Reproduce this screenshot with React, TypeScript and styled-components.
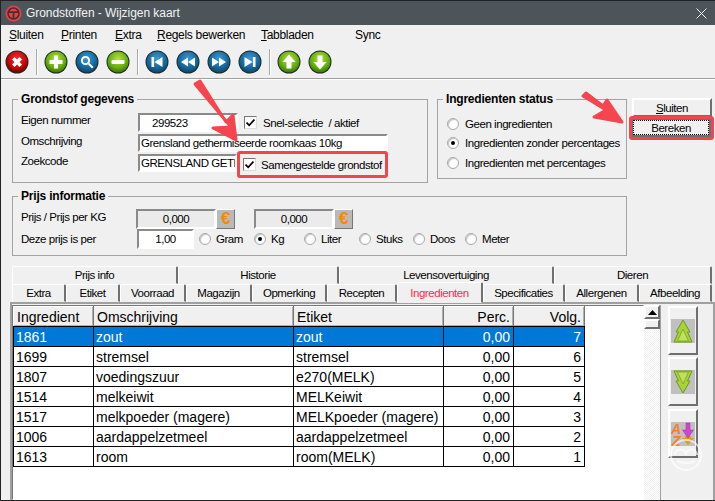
import React from "react";
import styled, { createGlobalStyle } from "styled-components";

const Global = createGlobalStyle`
  html, body { margin: 0; padding: 0; background: #f0f0f0; }
  body { font-family: "Liberation Sans", Arial, sans-serif; font-size: 11.5px; color: #000; letter-spacing: -.45px; }
  * { box-sizing: border-box; }
  span { white-space: nowrap; }
`;

const Win = styled.div`
  position: relative; width: 715px; height: 501px; overflow: hidden; background: #f0f0f0;
  border-left: 1px solid #222; border-bottom: 1px solid #222;
  display: flex; flex-direction: column;
`;
const TitleBar = styled.div`
  height: 25px; flex: none; background: #4d555a; color: #f2f3f3; display: flex; align-items: center;
  padding: 0 8px 0 4px; font-size: 12px; gap: 4px; border-top: 1px solid #222;
`;
const TitleText = styled.span` flex: 1; letter-spacing: -.05px; `;
const MenuBar = styled.div` height: 20px; flex: none; display: flex; align-items: center; padding: 0 0 0 8px; font-size: 12px; letter-spacing: -.3px; `;
const MenuItem = styled.span<{ $w: number }>` width: ${p => p.$w}px; flex: none; u { text-decoration: underline; } `;
const ToolBar = styled.div`
  height: 34px; flex: none; display: flex; align-items: center; padding: 0 0 0 4px; gap: 7px;
  border-bottom: 1px solid #a0a0a0; box-shadow: 0 1px 0 #fff;
`;
const ToolSep = styled.span` width: 2px; height: 26px; background: #a8a8a8; border-right: 1px solid #fff; margin-right: -1px; flex: none; `;

const Top = styled.div`
  display: grid; flex: none; grid-template-columns: 416px 9px 190px 5px 82px; grid-template-rows: 97px 68px;
  padding: 13px 0 0 11px; height: 187px;
`;
const Group = styled.fieldset<{ $col: string; $row: number; $h: number }>`
  grid-column: ${p => p.$col}; grid-row: ${p => p.$row}; height: ${p => p.$h}px; margin: 0; padding: 0 0 0 8px; min-width: 0;
  border: 1px solid #a3a3a3;
`;
const Legend = styled.legend`
  font-weight: bold; font-size: 12px; letter-spacing: -.2px; padding: 0 3px; margin-left: -3px; line-height: 14px; color: #000;
`;
const Row = styled.div<{ $h: number }>` display: flex; align-items: center; height: ${p => p.$h}px; `;
const Label = styled.span<{ $w: number; $up?: number }>` width: ${p => p.$w}px; flex: none; margin-top: ${p => p.$up ?? -4}px; `;
const Rows = styled.div<{ $mt: number }>` margin-top: ${p => p.$mt}px; display: flex; flex-direction: column; `;
const Sunken = styled.div<{ $w: number; $h: number; $bg?: string; $align?: string; $pl?: number }>`
  width: ${p => p.$w}px; height: ${p => p.$h}px; flex: none; background: ${p => p.$bg ?? "#fff"};
  border: 2px solid; border-color: #8a8a8a #fff #fff #8a8a8a; display: flex; align-items: center; overflow: hidden; white-space: nowrap;
  justify-content: ${p => p.$align ?? "flex-start"}; padding: 0 1px 0 ${p => p.$pl ?? 1}px;
`;
const CodeField = styled(Sunken)` align-self: flex-start; margin-top: 1px; `;
const Box = styled.span`
  width: 13px; height: 13px; flex: none; background: #fff; border: 1px solid; border-color: #777 #ddd #ddd #777;
  display: inline-flex; align-items: center; justify-content: center;
`;
const CheckWrap = styled.div` display: flex; align-items: center; gap: 6px; margin-left: 6px; `;
const Highlight = styled.div`
  width: 151px; height: 27px; margin-top: -2px; align-self: flex-start; border: 3px solid #f0474f; border-radius: 3px; flex: none; padding-left: 3px;
  display: flex; align-items: center; gap: 5px; background: #f0f0f0;
`;
const Dot = styled.span<{ $on?: boolean }>`
  width: 12px; height: 12px; border-radius: 50%; flex: none; background: #fff; border: 1px solid #a8a8a8;
  display: inline-flex; align-items: center; justify-content: center;
  box-shadow: inset 1px 1px 1px #c4c4c4;
  &::after { content: ""; width: 4px; height: 4px; border-radius: 50%; background: ${p => (p.$on ? "#000" : "transparent")}; }
`;
const RadioRow = styled.div` display: flex; align-items: center; height: 19.5px; gap: 6px; padding-left: 1px; `;
const Side = styled.div` grid-column: 5; grid-row: 1; display: flex; flex-direction: column; padding-top: 6px; margin-left: -3px; `;
const Raised = styled.div`
  background: #f0f0f0; border: 2px solid; border-color: #fff #6f6f6f #6f6f6f #fff; display: flex; align-items: center; justify-content: center;
`;
const CloseBtn = styled(Raised)` width: 80px; height: 19px; margin-left: 3px; u { text-decoration: underline; } `;
const RedBox = styled.div`
  width: 85px; height: 24px; margin-top: -1px; border: 3px solid #f0474f; border-radius: 3px; display: flex;
  background: #6f6f6f; padding: 0 1px 1px 0;
`;
const Focus = styled.div`
  flex: 1; margin: 1px; background: #f0f0f0; outline: 1px dotted #000; outline-offset: -1px; display: flex; align-items: center; justify-content: center;
`;
const EuroBtn = styled.div`
  width: 19px; height: 20px; flex: none; background: #b9b9b9; border: 1px solid; border-color: #fff #777 #777 #fff;
  color: #f08a10; font-weight: bold; font-size: 17px; display: flex; align-items: center; justify-content: center;
`;
const PriceRow = styled.div` display: flex; align-items: center; width: 118px; flex: none; `;
const Spacer = styled.div` width: 5px; flex: none; `;
const Option = styled.div<{ $w: number }>` width: ${p => p.$w}px; flex: none; display: flex; align-items: center; gap: 5px; `;

const Tabs = styled.div` flex: none; height: 36px; padding-left: 11px; display: flex; flex-direction: column; position: relative; z-index: 1; `;
const TabRow = styled.div` display: flex; height: 18px; align-items: flex-end; `;
const Tab = styled.div<{ $w: number; $on?: boolean }>`
  width: ${p => p.$w}px; flex: none; height: ${p => (p.$on ? 21 : 18)}px; margin-bottom: ${p => (p.$on ? -1 : 0)}px;
  background: #f0f0f0; border: 1px solid; border-color: #fff #707070 transparent #fff; border-right-width: 2px;
  border-radius: 2px 2px 0 0; display: flex; align-items: center; justify-content: center; white-space: nowrap;
  color: ${p => (p.$on ? "#ff2a45" : "#000")};
`;
const Panel = styled.div`
  flex: 1; margin-left: 9px; display: flex; border: 2px solid; border-color: #a0a0a0; border-bottom: 0; padding: 1px 0 0 0; min-height: 0;
`;
const ListArea = styled.div` width: 632px; flex: none; background: #fff; border: 1px solid; border-color: #777 #fff #fff #777; `;
const Table = styled.table`
  border-collapse: collapse; table-layout: fixed; width: 571px; font-size: 14px; letter-spacing: 0;
`;
const Th = styled.th<{ $w: number; $right?: boolean }>`
  width: ${p => p.$w}px; height: 20px; padding: 0 3px; font-weight: normal; background: #f0f0f0; text-align: ${p => (p.$right ? "right" : "left")};
  border: 1px solid; border-color: #fff #777 #000 #fff; box-shadow: inset -1px -1px 0 #b0b0b0; color: #000;
`;
const Td = styled.td<{ $right?: boolean; $sel?: boolean }>`
  height: 20px; padding: 0 3px 0 2px; text-align: ${p => (p.$right ? "right" : "left")};
  border: 1px solid #000; background: ${p => (p.$sel ? "#0078d7" : "#fff")}; color: ${p => (p.$sel ? "#fff" : "#000")}; white-space: nowrap; overflow: hidden;
`;
const Scroll = styled.div`
  width: 17px; flex: none; display: flex; flex-direction: column; border-right: 1px solid #a0a0a0;
  background: repeating-conic-gradient(#f0f0f0 0 25%, #fff 0 50%) 0 0 / 2px 2px;
`;
const ScrollBtn = styled(Raised)` height: 14px; flex: none; `;
const Thumb = styled(Raised)` height: 10px; flex: none; `;
const Tools = styled.div` flex: 1; padding: 1px 0 0 7px; display: flex; flex-direction: column; gap: 2px; `;
const BigBtn = styled(Raised)<{ $mt?: number }>` width: 30px; height: 49px; margin-top: ${p => p.$mt ?? 0}px; `;
const Overlay = styled.svg` position: absolute; left: -1px; top: 0; width: 715px; height: 501px; pointer-events: none; z-index: 5; `;
const Sprite = styled.svg` position: absolute; width: 0; height: 0; `;
const OrbSvg = styled.svg` flex: none; `;
const IconBg = styled.svg<{ $flip?: boolean }>` background: #c0c0c0; transform: ${p => (p.$flip ? "scaleY(-1)" : "none")}; `;

const Shared = () => (
  <Sprite>
    <defs>
      {[["g", "#b4e23a", "#68ae10", "#2f6b06"], ["b", "#3f9bd2", "#15689f", "#0d4062"], ["r", "#f03030", "#c80808", "#5a0000"]].map(([id, a, b, c]) => (
        <radialGradient key={id} id={"c" + id} cx="50%" cy="35%" r="70%">
          <stop offset="0" stopColor={a} /><stop offset=".6" stopColor={b} /><stop offset="1" stopColor={c} />
        </radialGradient>
      ))}
    </defs>
  </Sprite>
);

const Orb = ({ c, d }: { c: string; d: React.ReactNode }) => (
  <OrbSvg width="24" height="24" viewBox="0 0 24 24">
    <circle cx="12" cy="12" r="11.500" fill="#1c2a22" />
    <circle cx="12" cy="12" r="10.600" fill={`url(#c${c})`} />
    <g fill="#fff" stroke="none">{d}</g>
  </OrbSvg>
);
const Glyph = {
  x: <path d="M7 9.500 9.500 7 12 9.500 14.500 7 17 9.500 14.500 12 17 14.500 14.500 17 12 14.500 9.500 17 7 14.500 9.500 12Z" />,
  plus: <path d="M10 5.500h4V10h4.500v4H14v4.500h-4V14H5.500v-4H10Z" />,
  minus: <rect x="5.500" y="10" width="13" height="4" rx="1" />,
  search: <g><circle cx="10.500" cy="10.500" r="3.600" fill="none" stroke="#fff" strokeWidth="2" /><path d="M13 14.400 14.400 13 18.500 17 17 18.500Z" /></g>,
  first: <path d="M6.500 7h2.600v10H6.500ZM17.500 7v10l-8-5Z" />,
  prev: <path d="M12 7.500v9L5 12ZM19 7.500v9L12 12Z" />,
  next: <path d="M5 7.500v9l7-4.500ZM12 7.500v9l7-4.500Z" />,
  last: <path d="M17.500 7h-2.600v10h2.600ZM6.500 7v10l8-5Z" />,
  up: <path d="M12 4.500 18.500 12H14.500v6.500h-5V12H5.500Z" />,
  down: <path d="M12 19.500 5.500 12H9.500V5.500h5V12h4Z" />,
};

const Check = () => (
  <svg width="9" height="9" viewBox="0 0 9 9"><path d="M.5 4.500 3.200 7.300 8.500 1.500" fill="none" stroke="#000" strokeWidth="1.800" /></svg>
);

const Chevrons = ({ flip }: { flip?: boolean }) => (
  <IconBg width="24" height="24" viewBox="0 0 24 24" $flip={flip}>
    <path d="M12 1 5 13h2.500L3 23h18l-4.500-10H19Z" fill="#a9d13a" stroke="#6c9a16" strokeWidth="1" />
    <path d="M12 10 6.500 22h11Z" fill="#bfe060" stroke="#7aa61e" strokeWidth=".8" />
  </IconBg>
);
const Sorter = () => (
  <IconBg width="24" height="24" viewBox="0 0 24 24">
    <text x="0" y="12" fontSize="14" fontWeight="bold" fontStyle="italic" fontFamily="Liberation Sans" fill="#f57f2a">A</text>
    <text x="1" y="24" fontSize="14" fontWeight="bold" fontStyle="italic" fontFamily="Liberation Sans" fill="#f57f2a">Z</text>
    <path d="M11 16 17 23 23 16h-3v-2h-6v2Z" fill="#e09a20" />
    <path d="M15 1h4v7h3.500L17 16 11.500 8H15Z" fill="#d048c8" stroke="#a02ca0" strokeWidth=".5" />
  </IconBg>
);

const rows = [
  ["1861", "zout", "zout", "0,00", "7"],
  ["1699", "stremsel", "stremsel", "0,00", "6"],
  ["1807", "voedingszuur", "e270(MELK)", "0,00", "5"],
  ["1514", "melkeiwit", "MELKeiwit", "0,00", "4"],
  ["1517", "melkpoeder (magere)", "MELKpoeder (magere)", "0,00", "3"],
  ["1006", "aardappelzetmeel", "aardappelzetmeel", "0,00", "2"],
  ["1613", "room", "room(MELK)", "0,00", "1"],
];
const tabs1: [string, number][] = [["Prijs info", 166], ["Historie", 161], ["Levensovertuiging", 215], ["Dieren", 158]];
const tabs2: [string, number][] = [["Extra", 54], ["Etiket", 54], ["Voorraad", 66], ["Magazijn", 66], ["Opmerking", 75], ["Recepten", 70], ["Ingredienten", 86], ["Specificaties", 82], ["Allergenen", 74], ["Afbeelding", 73]];
const units: [string, number, boolean][] = [["Gram", 55, false], ["Kg", 50, true], ["Liter", 55, false], ["Stuks", 54, false], ["Doos", 52, false], ["Meter", 60, false]];

export default function App() {
  return (
    <Win>
      <Global />
      <Shared />
      <TitleBar>
        <svg width="17" height="17" viewBox="0 0 18 18">
          <circle cx="9" cy="9" r="8.500" fill="#e0434a" />
          <circle cx="9" cy="9" r="5.800" fill="none" stroke="#4d2a2e" strokeWidth="1.600" />
          <path d="M3.500 7.500h11M9 8v6" stroke="#4d2a2e" strokeWidth="1.800" />
        </svg>
        <TitleText>Grondstoffen - Wijzigen kaart</TitleText>
        <svg width="11" height="11" viewBox="0 0 11 11"><path d="M.5.500l10 10M10.500.500l-10 10" stroke="#f2f3f3" /></svg>
      </TitleBar>
      <MenuBar>
        <MenuItem $w={52}><u>S</u>luiten</MenuItem>
        <MenuItem $w={54}><u>P</u>rinten</MenuItem>
        <MenuItem $w={42}><u>E</u>xtra</MenuItem>
        <MenuItem $w={104}><u>R</u>egels bewerken</MenuItem>
        <MenuItem $w={94}><u>T</u>abbladen</MenuItem>
        <MenuItem $w={40}>Sync</MenuItem>
      </MenuBar>
      <ToolBar>
        <Orb c="r" d={Glyph.x} />
        <ToolSep />
        <Orb c="g" d={Glyph.plus} />
        <Orb c="b" d={Glyph.search} />
        <Orb c="g" d={Glyph.minus} />
        <ToolSep />
        <Orb c="b" d={Glyph.first} />
        <Orb c="b" d={Glyph.prev} />
        <Orb c="b" d={Glyph.next} />
        <Orb c="b" d={Glyph.last} />
        <ToolSep />
        <Orb c="g" d={Glyph.up} />
        <Orb c="g" d={Glyph.down} />
      </ToolBar>
      <Top>
        <Group $col="1" $row={1} $h={91}>
          <Legend>Grondstof gegevens</Legend>
          <Rows $mt={6}>
            <Row $h={21}>
              <Label $w={117} $up={-5}>Eigen nummer</Label>
              <Sunken $w={100} $h={19} $pl={12}>299523</Sunken>
              <CheckWrap><Box><Check /></Box><span>Snel-selectie &nbsp;/ aktief</span></CheckWrap>
            </Row>
            <Row $h={20}>
              <Label $w={117}>Omschrijving</Label>
              <Sunken $w={250} $h={18}>Grensland gethermiseerde roomkaas 10kg</Sunken>
            </Row>
            <Row $h={24}>
              <Label $w={117} $up={-8}>Zoekcode</Label>
              <CodeField $w={99} $h={18}>GRENSLAND GETH</CodeField>
              <Highlight>
                <Box><Check /></Box><span>Samengestelde grondstof</span>
              </Highlight>
            </Row>
          </Rows>
        </Group>
        <Group $col="3" $row={1} $h={87}>
          <Legend>Ingredienten status</Legend>
          <Rows $mt={8}>
            <RadioRow><Dot /><span>Geen ingredienten</span></RadioRow>
            <RadioRow><Dot $on /><span>Ingredienten zonder percentages</span></RadioRow>
            <RadioRow><Dot /><span>Ingredienten met percentages</span></RadioRow>
          </Rows>
        </Group>
        <Side>
          <CloseBtn><span><u>S</u>luiten</span></CloseBtn>
          <RedBox><Focus>Bereken</Focus></RedBox>
        </Side>
        <Group $col="1 / span 3" $row={2} $h={67}>
          <Legend>Prijs informatie</Legend>
          <Rows $mt={5}>
            <Row $h={21}>
              <Label $w={115}>Prijs / Prijs per KG</Label>
              <PriceRow>
                <Sunken $w={80} $h={20} $bg="#ebebeb" $align="center">0,000</Sunken>
                <EuroBtn>€</EuroBtn>
              </PriceRow>
              <PriceRow>
                <Sunken $w={80} $h={20} $bg="#ebebeb" $align="center">0,000</Sunken>
                <EuroBtn>€</EuroBtn>
              </PriceRow>
            </Row>
            <Row $h={20}>
              <Label $w={116} $up={0}>Deze prijs is per</Label>
              <Sunken $w={57} $h={20} $align="center">1,00</Sunken>
              <Spacer />
              {units.map(([u, w, on]) => (
                <Option key={u} $w={w}><Dot $on={on} /><span>{u}</span></Option>
              ))}
            </Row>
          </Rows>
        </Group>
      </Top>
      <Tabs>
        <TabRow>{tabs1.map(([t, w]) => <Tab key={t} $w={w}>{t}</Tab>)}</TabRow>
        <TabRow>{tabs2.map(([t, w]) => <Tab key={t} $w={w} $on={t === "Ingredienten"}>{t}</Tab>)}</TabRow>
      </Tabs>
      <Panel>
        <ListArea>
          <Table>
            <thead>
              <tr>
                <Th $w={80}>Ingredient</Th><Th $w={200}>Omschrijving</Th><Th $w={150}>Etiket</Th><Th $w={70} $right>Perc.</Th><Th $w={71} $right>Volg.</Th>
              </tr>
            </thead>
            <tbody>
              {rows.map((r, i) => (
                <tr key={r[0]}>
                  {r.map((c, j) => <Td key={j} $sel={i === 0} $right={j > 2}>{c}</Td>)}
                </tr>
              ))}
            </tbody>
          </Table>
        </ListArea>
        <Scroll>
          <ScrollBtn><svg width="9" height="5" viewBox="0 0 9 5"><path d="M4.500 0 9 5H0Z" /></svg></ScrollBtn>
          <Thumb />
        </Scroll>
        <Tools>
          <BigBtn><Chevrons /></BigBtn>
          <BigBtn><Chevrons flip /></BigBtn>
          <BigBtn $mt={1}><Sorter /></BigBtn>
        </Tools>
      </Panel>
      <Overlay viewBox="0 0 715 501">
        <path d="M195 84 231 127 213 128 236 140 233 115 226 122 200 81Z" fill="#f5454f" stroke="#f5454f" strokeWidth="3" strokeLinejoin="round" />
        <path d="M583 96 606 110 594 117 622 122 607 100 603 106 586 93Z" fill="#f5454f" stroke="#f5454f" strokeWidth="3" strokeLinejoin="round" />
        <g fill="none" stroke="#fff" strokeOpacity=".65" strokeWidth="2">
          <circle cx="686" cy="455" r="15" />
          <path d="M675 455a5 5 0 0 1 11 0 5 5 0 0 1 11 0M677 461q9 4 18 0" />
        </g>
      </Overlay>
    </Win>
  );
}
